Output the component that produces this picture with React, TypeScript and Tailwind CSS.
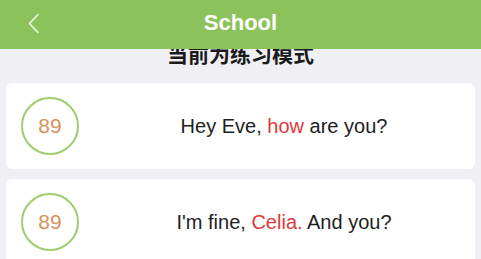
import React from "react";

const font = { fontFamily: '"Liberation Sans", Arial, "Noto Sans CJK SC", sans-serif' };

function Card({ children }: { children: React.ReactNode }) {
  return (
    <div className="mx-[6px] h-[86px] rounded-[6px] bg-white flex items-center pl-[15px]">
      <div className="w-[58px] h-[58px] rounded-full border-2 border-[#a0cc70] flex items-center justify-center text-[21px] text-[#d6935b] shrink-0">
        89
      </div>
      <div className="flex-1 ml-[14px] text-center text-[20px] text-[#1e1e1e]">{children}</div>
    </div>
  );
}

export default function App() {
  return (
    <div className="w-[481px] h-[259px] overflow-hidden bg-[#efeff4] flex flex-col" style={font}>
      <div className="relative z-10 h-[49px] bg-[#8bc25b] flex items-center justify-center shrink-0">
        <svg className="absolute left-[27px] top-[13px]" width="13" height="21" viewBox="0 0 13 21">
          <path d="M11 1.5 L2.5 10.5 L11 19.5" fill="none" stroke="#eef7e6" strokeWidth="1.7" strokeLinecap="round" strokeLinejoin="round" />
        </svg>
        <span className="text-[22px] font-bold text-white -mt-[4px]">School</span>
      </div>
      <div className="-mt-[8px] mb-[18px] h-[24px] leading-[24px] text-center text-[21px] font-bold text-[#1a1a1a]" style={{ fontFamily: '"Noto Sans CJK SC", sans-serif' }}>
        当前为练习模式
      </div>
      <div className="flex flex-col gap-[10px]">
        <Card>
          Hey Eve, <span className="text-[#e2373b]">how</span> are you?
        </Card>
        <Card>
          I'm fine, <span className="text-[#e2373b]">Celia.</span> And you?
        </Card>
      </div>
    </div>
  );
}
